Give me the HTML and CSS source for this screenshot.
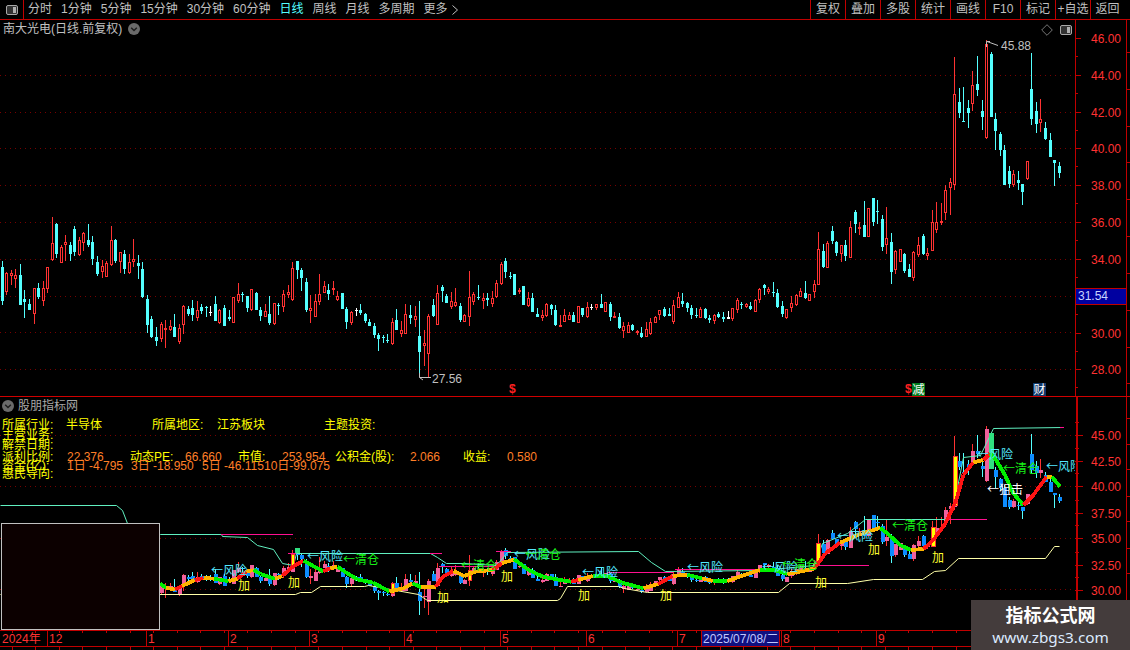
FILE: index.html
```html
<!DOCTYPE html>
<html lang="zh-CN">
<head>
<meta charset="utf-8">
<title>南大光电</title>
<link rel="stylesheet" href="styles.css">
</head>
<body>
<div class="terminal">
  <header class="toolbar">
    <div class="toggle-cell">
      <svg class="toggle-icon" viewBox="0 0 12 10"><rect x="0.5" y="0.5" width="11" height="9" rx="1.5" class="toggle-frame"/><rect x="7" y="2" width="3" height="6" class="toggle-fill"/></svg>
    </div>
    <nav class="periods">
      <span>分时</span><span>1分钟</span><span>5分钟</span><span>15分钟</span><span>30分钟</span><span>60分钟</span><span class="active">日线</span><span>周线</span><span>月线</span><span>多周期</span><span class="more">更多<svg class="more-arrow" viewBox="0 0 6 10"><path d="M.5 .5 5.5 5 .5 9.5"/></svg></span>
    </nav>
    <nav class="tools">
      <span>复权</span><span>叠加</span><span>多股</span><span>统计</span><span>画线</span><span>F10</span><span>标记</span><span>+自选</span><span>返回</span>
    </nav>
  </header>

  <section class="panel panel-price">
    <div class="plot">
      <svg id="price" class="chart" viewBox="0 20 1075 376"></svg>
      <div class="caption caption-price">
        <span>南大光电(日线.前复权)</span>
        <svg class="chevron" viewBox="0 0 12 12"><circle cx="6" cy="6" r="6" class="chevron-disc"/><path d="M3.2 4.8 6 7.6 8.8 4.8" class="chevron-mark"/></svg>
      </div>
      <div class="plot-tools">
        <svg class="diamond" viewBox="0 0 12 12"><path d="M6 .7 11.3 6 6 11.3 .7 6Z"/></svg>
        <svg class="toggle-icon" viewBox="0 0 12 10"><rect x="0.5" y="0.5" width="11" height="9" rx="1.5" class="toggle-frame"/><rect x="7" y="2" width="3" height="6" class="toggle-fill"/></svg>
      </div>
    </div>
    <div class="axis">
      <svg id="priceAxis" class="chart" viewBox="1075 20 55 376"></svg>
      <div class="last-price">31.54</div>
    </div>
  </section>

  <section class="panel panel-indicator">
    <div class="plot">
      <svg id="indicator" class="chart" viewBox="0 397 1075 233"></svg>
      <div class="caption caption-indicator">
        <svg class="chevron" viewBox="0 0 12 12"><circle cx="6" cy="6" r="6" class="chevron-disc"/><path d="M3.2 4.8 6 7.6 8.8 4.8" class="chevron-mark"/></svg>
        <span>股朋指标网</span>
      </div>
      <div class="info">
        <div class="row row-a"><span>所属行业:</span><span>半导体</span><span>所属地区:</span><span>江苏板块</span><span>主题投资:</span></div>
        <div class="row row-plain"><span>主营业务:</span></div>
        <div class="row row-plain"><span>解禁日期:</span></div>
        <div class="row row-d"><span>派利比例:</span><b>22.376</b><span>动态PE:</span><b>66.660</b><span>市值:</span><b>253.954</b><span>公积金(股):</span><b>2.066</b><span>收益:</span><b>0.580</b></div>
        <div class="row row-e"><span>资金(亿):</span><b>1日 -4.795</b><b>3日 -18.950</b><b>5日 -46.115</b><b>10日-99.075</b></div>
        <div class="row row-plain"><span>惠民导向:</span></div>
      </div>
      <div class="inset"></div>
    </div>
    <div class="axis axis-indicator">
      <svg id="indicatorAxis" class="chart" viewBox="1075 397 55 233"></svg>
    </div>
  </section>

  <footer class="timeline">
    <svg id="timeline" class="chart" viewBox="0 630 1130 20"></svg>
  </footer>

  <aside class="watermark">
    <strong>指标公式网</strong>
    <span>www.zbgs3.com</span>
  </aside>
</div>
<script src="chart.js"></script>
</body>
</html>
```

FILE: styles.css
```css
* { box-sizing: border-box; }
html, body { margin: 0; padding: 0; background: #000; }
body { overflow: hidden; }

.terminal {
  position: relative;
  width: 1130px;
  height: 650px;
  overflow: hidden;
  background: #000;
  color: #c0c0c0;
  font: 12px/1 "Liberation Sans", "Noto Sans CJK SC", sans-serif;
}

/* toolbar */
.toolbar {
  display: flex;
  height: 20px;
  border-bottom: 1px solid #c00000;
}
.toggle-cell {
  display: flex;
  align-items: center;
  justify-content: center;
  width: 24px;
  border-right: 1px solid #c00000;
}
.toggle-icon { display: block; width: 12px; height: 10px; }
.toggle-frame { fill: #333; stroke: #a8a8a8; }
.toggle-fill { fill: #b0b0b0; }

.periods {
  display: flex;
  align-items: center;
  gap: 9px;
  padding-left: 4px;
  line-height: 19px;
}
.periods .active { color: #54ffff; }
.more { display: flex; align-items: center; gap: 4px; }
.more-arrow { display: block; width: 6px; height: 10px; }
.more-arrow path { fill: none; stroke: #c0c0c0; }

.tools {
  display: flex;
  margin-left: auto;
  width: 320px;
}
.tools span {
  flex: 0 0 35px;
  border-left: 1px solid #c00000;
  text-align: center;
  line-height: 19px;
}
.tools span:last-child { flex: 1 1 auto; padding-right: 6px; }

/* panels */
.panel { display: flex; }
.panel-price { height: 376px; }
.panel-indicator { height: 234px; border-top: 1px solid #d00000; }
.plot { position: relative; width: 1075px; }
.axis { position: relative; width: 55px; }
.chart { display: block; width: 100%; height: 100%; }
#timeline { height: 20px; }

.caption {
  position: absolute;
  display: flex;
  align-items: center;
}
.caption-price { left: 3px; top: 2px; height: 14px; gap: 6px; }
.caption-indicator { left: 2px; top: 2px; height: 14px; gap: 4px; color: #a8a8a8; }
.chevron { display: block; width: 12px; height: 12px; }
.chevron-disc { fill: #6a6a6a; }
.chevron-mark { fill: none; stroke: #1c1c1c; stroke-width: 1.4; }

.plot-tools {
  position: absolute;
  right: 3px;
  top: 4px;
  display: flex;
  align-items: center;
  gap: 7px;
}
.diamond { display: block; width: 12px; height: 12px; }
.diamond path { fill: none; stroke: #777; }

.last-price {
  position: absolute;
  left: 0;
  top: 268px;
  width: 52px;
  height: 17px;
  padding-left: 2px;
  background: #0000a0;
  border: 1px solid #c00000;
  color: #c8d4ff;
  line-height: 15px;
}

/* info rows */
.info {
  position: absolute;
  left: 2px;
  top: 22px;
  color: #ffff00;
}
.row { display: grid; white-space: nowrap; }
.row b { font-weight: 400; color: #ff7f27; }
.row span, .row b { line-height: 12px; }
.row:nth-child(1) { height: 10px; }
.row:nth-child(2) { height: 10px; }
.row:nth-child(3) { height: 12px; }
.row:nth-child(4) { height: 9px; }
.row:nth-child(5) { height: 8px; }
.row:nth-child(6) { height: 12px; }
.row-a { grid-template-columns: 64px 86px 65px 107px auto; }
.row-d { grid-template-columns: 65px 63px 55px 53px 44px 53px 75px 53px 44px auto; }
.row-e { grid-template-columns: 65px 64px 71px 62px auto; }

.inset {
  position: absolute;
  left: 1px;
  top: 126px;
  width: 159px;
  height: 107px;
  background: #0c0000;
  border: 1px solid #c0c0c0;
}

/* timeline */
.timeline { height: 20px; }

/* chart marks */
.grid { stroke: #780000; stroke-width: 1; stroke-dasharray: 1 4; fill: none; shape-rendering: crispEdges; }
.axis-line { stroke: #c00000; stroke-width: 1; fill: none; shape-rendering: crispEdges; }
.axis-line-bold { stroke: #c00000; stroke-width: 2; fill: none; shape-rendering: crispEdges; }
.axis-text { fill: #ff3232; font: 12px "Liberation Sans", sans-serif; }
.time-text { fill: #ff3232; font: 12px "Liberation Sans", "Noto Sans CJK SC", sans-serif; }
.date-box { fill: #101080; stroke: #c00000; }
.date-text { fill: #c0c8ff; font: 12px "Liberation Sans", "Noto Sans CJK SC", sans-serif; }
.extreme-text { fill: #c0c0c0; font: 12px "Liberation Sans", sans-serif; }
.extreme-mark { stroke: #c0c0c0; fill: none; }
.wick-up { stroke: #ff3232; }
.wick-down { stroke: #54ffff; }
.wick-flat { stroke: #fff; }
.body-up { fill: #000; stroke: #ff3232; }
.body-down { fill: #54ffff; }
.body-flat { fill: #fff; }
.pink { fill: #f0609c; }
.blue { fill: #0c8cff; }
.signal-yellow { fill: #ffff00; stroke: #ff3232; }
.signal-green { fill: #30e080; }
.support { fill: none; stroke: #ffffa8; stroke-width: 1; }
.resist { fill: none; stroke: #60f0c0; stroke-width: 1; }
.pressure { fill: none; stroke: #ff1090; stroke-width: 1; shape-rendering: crispEdges; }
.trend { fill: none; stroke-width: 3.8; shape-rendering: crispEdges; }
.trend-r { stroke: #ff1414; }
.trend-g { stroke: #00f000; }
.trend-o { stroke: #ffb400; }
.tag { font: 12px "Noto Sans CJK SC", sans-serif; }
.tag-risk { fill: #54e8ff; }
.tag-clear { fill: #18f018; }
.tag-add { fill: #ffff30; }
.tag-hit { fill: #fff; }
.mark-s { fill: #ff2020; font: bold 12px "Liberation Sans", sans-serif; }
.badge-green { fill: #007a1e; }
.badge-navy { fill: #10386a; }
.badge-text { fill: #fff; font: 12px "Noto Sans CJK SC", sans-serif; }

/* watermark */
.watermark {
  position: absolute;
  left: 971px;
  top: 600px;
  width: 159px;
  height: 50px;
  padding-top: 4px;
  display: flex;
  flex-direction: column;
  align-items: center;
  gap: 3px;
  background: #443c3c;
}
.watermark strong {
  color: #fff;
  font: 700 18px/21px "Noto Sans CJK SC", sans-serif;
}
.watermark span {
  color: #dcebff;
  font: 15.3px/18px "Noto Sans", sans-serif;
}
```

FILE: chart.js
```js
const NS = 'http://www.w3.org/2000/svg';
function add(svg, tag, cls, attrs, text) {
  const n = document.createElementNS(NS, tag);
  if (cls) n.setAttribute('class', cls);
  for (const k in attrs) n.setAttribute(k, attrs[k]);
  if (text !== undefined) n.textContent = text;
  svg.appendChild(n);
  return n;
}
const price = document.getElementById('price');
const priceAxis = document.getElementById('priceAxis');
const indicator = document.getElementById('indicator');
const indicatorAxis = document.getElementById('indicatorAxis');
const timeline = document.getElementById('timeline');

/* candles: x, high, bodyTop, bodyBottom, low, kind (measured in 3x crops) */
const blocks = [
  [0, 210, [[7,153,171,273,285,'c'],[19,185,190,245,255,'r'],[34,180,190,197,225,'r'],[46,177,195,207,235,'r'],[61,162,195,285,285,'c'],[73,240,267,276,324,'c'],[88,267,282,300,300,'c'],[103,235,235,311,342,'r'],[115,219,235,262,268,'c'],[130,213,235,273,288,'r'],[142,171,172,238,249,'r'],[157,21,100,150,153,'r'],[169,40,42,132,144,'c'],[184,106,112,158,159,'r'],[196,75,96,105,153,'r'],[211,97,105,132,153,'c'],[223,48,57,126,138,'c'],[238,82,91,135,138,'r'],[250,66,70,99,123,'r'],[265,42,91,105,111,'c'],[277,78,96,147,165,'c'],[292,138,156,192,198,'c'],[307,150,168,186,204,'r'],[319,153,159,201,201,'r'],[334,48,91,165,168,'r'],[346,87,90,153,159,'c'],[361,126,126,156,189,'r'],[373,121,132,177,192,'c'],[388,132,156,189,192,'r'],[400,87,148,156,171,'r'],[415,135,159,168,207,'c'],[427,156,177,261,264,'c'],[442,255,267,345,369,'c'],[454,318,327,381,384,'c'],[469,351,381,393,408,'c'],[484,336,342,387,396,'r'],[496,330,354,360,414,'r'],[511,330,348,360,363,'r'],[523,312,351,381,381,'c'],[538,342,354,396,402,'r'],[550,285,288,346,372,'r'],[565,288,297,312,318,'c'],[577,270,294,315,333,'c'],[592,273,300,324,333,'r'],[604,282,291,303,312,'c'],[619,288,291,293,321,'c'],[631,288,306,307,318,'w'],[646,258,282,333,333,'c'],[658,297,300,339,342,'r'],[673,285,294,348,348,'c'],[688,300,321,327,333,'c'],[700,261,261,339,339,'r'],[715,219,252,273,279,'r'],[727,246,252,255,276,'c'],[742,258,258,294,306,'c'],[754,237,238,300,303,'r'],[769,246,249,300,300,'c'],[781,291,300,318,333,'c'],[796,282,303,321,321,'r'],[808,258,312,339,345,'c'],[823,279,279,342,345,'r'],[835,279,284,287,315,'c'],[850,240,252,291,306,'r'],[865,225,246,255,264,'r'],[877,156,174,270,273,'r'],[892,153,153,180,207,'c']]],
  [300, 240, [[4,84,90,114,153,'c'],[19,114,126,210,216,'c'],[31,165,204,213,249,'r'],[46,162,183,231,231,'r'],[58,102,162,186,195,'r'],[73,123,138,159,159,'r'],[85,132,150,162,180,'c'],[100,123,144,150,165,'r'],[112,153,168,180,183,'r'],[127,159,159,207,207,'c'],[139,201,207,246,267,'c'],[154,213,216,249,255,'r'],[169,204,210,212,228,'w'],[181,192,210,219,225,'c'],[196,219,222,243,249,'c'],[208,237,246,258,258,'c'],[223,249,258,285,294,'c'],[235,279,285,297,333,'c'],[250,285,291,294,309,'c'],[262,282,300,303,309,'c'],[277,234,246,312,315,'r'],[289,207,240,270,270,'c'],[304,243,270,282,291,'r'],[316,192,222,282,282,'r'],[331,195,225,234,252,'c'],[346,198,228,240,261,'r'],[358,183,288,336,411,'c'],[373,270,309,318,378,'r'],[385,222,228,342,411,'r'],[400,177,195,228,231,'c'],[412,135,159,255,255,'r'],[427,135,141,153,186,'c'],[439,162,168,189,189,'c'],[454,156,183,201,207,'r'],[466,144,186,198,201,'r'],[481,189,198,240,246,'c'],[493,222,225,246,246,'r'],[508,93,171,231,258,'r'],[520,156,162,186,195,'r'],[535,135,171,174,180,'c'],[550,159,174,183,207,'r'],[562,159,174,180,198,'c'],[577,153,174,192,201,'r'],[589,120,129,171,174,'r'],[604,66,72,132,135,'r'],[616,54,63,96,114,'c'],[631,96,108,111,117,'c'],[643,102,102,165,165,'c'],[658,144,150,156,162,'r'],[670,138,138,195,195,'c'],[685,156,174,198,201,'r'],[697,159,174,216,216,'c'],[712,204,222,231,231,'c'],[727,210,225,234,243,'r'],[739,189,192,228,231,'r'],[754,192,195,207,225,'c'],[766,195,210,255,258,'c'],[781,225,255,261,261,'r'],[793,207,225,246,246,'r'],[808,216,225,240,240,'r'],[820,216,225,246,246,'c'],[835,198,198,249,249,'r'],[847,204,204,225,231,'c'],[862,186,201,231,234,'r'],[873,192,201,204,210,'w'],[889,192,192,204,210,'r']]],
  [600, 190, [[4,312,342,354,354,'c'],[16,336,336,366,366,'r'],[31,336,342,381,393,'c'],[43,366,378,384,384,'r'],[58,369,381,414,417,'c'],[70,396,408,423,444,'r'],[85,396,405,429,429,'r'],[97,402,405,420,423,'c'],[112,420,423,429,435,'r'],[124,411,429,441,444,'c'],[139,396,417,441,441,'r'],[151,384,396,432,435,'r'],[166,378,381,399,399,'r'],[178,360,360,375,390,'r'],[193,351,357,378,381,'c'],[208,354,372,378,378,'c'],[220,330,345,396,402,'r'],[235,306,321,354,354,'r'],[247,309,333,342,351,'c'],[262,336,339,354,366,'c'],[274,345,354,375,387,'c'],[289,354,375,378,384,'c'],[301,351,357,384,384,'r'],[316,354,357,384,387,'c'],[328,375,384,390,399,'c'],[343,372,375,393,402,'r'],[355,366,372,381,384,'c'],[370,366,381,387,396,'c'],[385,363,381,387,387,'w'],[397,354,354,387,393,'r'],[412,324,330,360,369,'r'],[424,336,342,345,357,'c'],[439,339,342,351,354,'r'],[451,336,348,357,360,'c'],[466,327,330,366,366,'r'],[478,294,297,330,339,'r'],[493,282,285,294,315,'c'],[505,291,297,306,312,'r'],[520,276,306,309,321,'c'],[532,297,309,351,354,'c'],[547,333,348,372,381,'c'],[559,357,357,384,387,'r'],[574,318,339,354,366,'r'],[589,312,315,345,348,'r'],[601,294,303,321,321,'r'],[616,273,309,324,327,'c'],[628,312,312,333,333,'r'],[643,270,282,306,324,'r'],[655,126,177,285,285,'r'],[670,162,183,231,234,'c'],[682,153,159,234,234,'r'],[697,108,123,153,162,'c'],[709,153,156,189,198,'c'],[724,165,165,192,216,'r'],[736,150,165,198,213,'c'],[751,93,111,204,204,'r'],[766,60,66,102,129,'c'],[778,96,111,114,135,'r'],[793,33,105,141,141,'c'],[805,54,54,141,141,'r'],[820,24,24,96,108,'c'],[832,30,63,66,102,'c'],[847,75,87,171,183,'c'],[859,51,144,165,192,'r'],[874,129,156,246,282,'c'],[886,180,183,240,252,'r']]],
  [900, 30, [[0,657,657,695,695,'r'],[13,670,672,723,729,'c'],[28,702,717,741,741,'c'],[40,663,666,744,753,'r'],[55,621,645,675,681,'r'],[70,612,618,672,675,'c'],[82,654,669,678,690,'r'],[97,540,576,662,662,'r'],[109,516,576,600,609,'r'],[124,519,573,579,585,'r'],[136,465,480,549,570,'r'],[151,444,456,474,555,'r'],[163,81,192,465,480,'r'],[178,174,216,249,264,'c'],[190,171,273,276,276,'c'],[205,210,234,249,294,'c'],[217,123,165,222,243,'r'],[232,78,162,180,198,'c'],[247,210,243,261,300,'c'],[259,30,42,324,327,'r'],[274,66,72,261,261,'c'],[286,249,267,303,360,'c'],[301,306,312,360,378,'c'],[313,345,360,465,465,'c'],[328,408,423,462,474,'c'],[340,420,432,465,471,'r'],[355,423,450,459,480,'c'],[367,462,462,486,525,'c'],[382,393,393,447,450,'r'],[394,69,177,267,285,'c'],[409,216,243,282,309,'c'],[421,207,267,279,306,'r'],[436,276,294,327,330,'c'],[451,309,330,381,381,'c'],[463,390,390,399,468,'c'],[478,396,408,429,444,'c']]]
];

const toLower = y => 425.19 + (y - 38) * 0.5588;

/* grids */
for (const y of [75, 112, 148.5, 185, 222, 259, 296, 332.5, 369]) {
  const yy = Math.floor(y) + 0.5;
  add(price, 'line', 'grid', { x1: 0, x2: 1075, y1: yy, y2: yy });
}
for (const y of [435.5, 486.5, 538.5, 589.5]) {
  add(indicator, 'line', 'grid', { x1: 0, x2: 1075, y1: y, y2: y });
}

/* candles */
for (const [ox, oy, rows] of blocks) {
  for (const [zx, hi, top, bot, lo, kind] of rows) {
    const x = Math.round(ox + zx / 3);
    const h = Math.round(oy + hi / 3), t = Math.round(oy + top / 3);
    const b = Math.max(Math.round(oy + bot / 3), t + 1), l = Math.max(Math.round(oy + lo / 3), b);
    const wick = { r: 'wick-up', c: 'wick-down', w: 'wick-flat' }[kind];
    add(price, 'line', wick, { x1: x + .5, x2: x + .5, y1: h, y2: l });
    if (kind === 'r') {
      add(price, 'rect', 'body-up', { x: x - .5, y: t + .5, width: 2, height: Math.max(b - t - 1, 1) });
    } else {
      add(price, 'rect', kind === 'c' ? 'body-down' : 'body-flat', { x: x - 1, y: t, width: 3, height: b - t });
    }
    const lh = toLower(h), lt = toLower(t), lb = toLower(b), ll = toLower(l);
    add(indicator, 'line', kind === 'r' ? 'wick-up' : 'wick-down', { x1: x + .5, x2: x + .5, y1: lh, y2: ll });
    add(indicator, 'rect', kind === 'r' ? 'pink' : 'blue', { x: x - 1.5, y: lt, width: 4, height: Math.max(lb - lt, 1) });
  }
}
price.querySelectorAll('line,rect').forEach(n => n.setAttribute('shape-rendering', 'crispEdges'));
indicator.querySelectorAll('line,rect').forEach(n => n.setAttribute('shape-rendering', 'crispEdges'));

/* extremes */
add(price, 'path', 'extreme-mark', { d: 'M986.5 47V41.5H990M987 41.5 998 45.5' });
add(price, 'text', 'extreme-text', { x: 1001, y: 50 }, '45.88');
add(price, 'path', 'extreme-mark', { d: 'M419.5 373V377.5H431M419.5 377.5 423 380' });
add(price, 'text', 'extreme-text', { x: 432, y: 383 }, '27.56');

/* event marks */
add(price, 'text', 'mark-s', { x: 509, y: 393 }, '$');
add(price, 'text', 'mark-s', { x: 905, y: 393 }, '$');
add(price, 'rect', 'badge-green', { x: 912, y: 383, width: 13, height: 13 });
add(price, 'text', 'badge-text', { x: 912.5, y: 394 }, '减');
add(price, 'rect', 'badge-navy', { x: 1033, y: 383, width: 13, height: 13 });
add(price, 'text', 'badge-text', { x: 1033.5, y: 394 }, '财');

/* price axis */
[[46,38],[44,75],[42,112],[40,148.5],[38,185.5],[36,222.5],[34,259],[32,296],[30,333],[28,369]].forEach(([p, y]) => {
  const yy = Math.floor(y) + .5;
  add(priceAxis, 'line', 'axis-line', { x1: 1075, x2: 1081, y1: yy, y2: yy });
  if (p !== 32) add(priceAxis, 'text', 'axis-text', { x: 1091, y: yy + 4 }, p.toFixed(2));
  const m = Math.floor(y + 18.45) + .5;
  if (m < 395) add(priceAxis, 'line', 'axis-line', { x1: 1075, x2: 1078, y1: m, y2: m });
  add(priceAxis, 'line', 'axis-line', { x1: 1127, x2: 1130, y1: m - 4, y2: m - 4 });
});
add(priceAxis, 'line', 'axis-line', { x1: 1075.5, x2: 1075.5, y1: 20, y2: 396 });
add(priceAxis, 'line', 'axis-line', { x1: 1126.5, x2: 1126.5, y1: 20, y2: 396 });

/* indicator axis */
[[45,435.5],[42.5,461.5],[40,486.5],[37.5,513],[35,538.5],[32.5,565],[30,590]].forEach(([p, y]) => {
  const yy = Math.floor(y) + .5;
  add(indicatorAxis, 'line', 'axis-line', { x1: 1075, x2: 1083, y1: yy, y2: yy });
  add(indicatorAxis, 'text', 'axis-text', { x: 1091, y: yy + 4 }, p.toFixed(2));
  add(indicatorAxis, 'line', 'axis-line', { x1: 1075, x2: 1079, y1: yy - 13, y2: yy - 13 });
  add(indicatorAxis, 'line', 'axis-line', { x1: 1127, x2: 1130, y1: yy - 17, y2: yy - 17 });
});
add(indicatorAxis, 'line', 'axis-line-bold', { x1: 1077, x2: 1077, y1: 397, y2: 630 });
add(indicatorAxis, 'line', 'axis-line', { x1: 1126.5, x2: 1126.5, y1: 397, y2: 630 });

/* indicator lines */
const poly = (cls, pts) => add(indicator, 'polyline', cls, { points: pts.map(p => (p[0] + .5) + ',' + (p[1] + .5)).join(' ') });
poly('resist', [[0,505],[116,505],[122,510],[127,523],[160,534],[221,534],[222,536],[247,537],[257,545],[273,549],[282,563],[293,565],[296,553],[430,553],[437,557],[446,563],[464,563],[496,565],[507,552],[638,551],[651,562],[665,571],[760,570],[814,565],[822,543],[847,533],[865,519],[945,519],[953,507],[963,457],[980,455],[993,428],[1063,427]]);
poly('support', [[0,594],[295,594],[300,592],[311,592],[320,586],[364,586],[368,585],[418,594],[427,600],[557,600],[560,598],[567,586],[618,586],[624,588],[647,592],[778,592],[789,583],[847,583],[873,579],[922,579],[934,571],[945,570],[958,558],[1045,558],[1054,546],[1059,546]]);
[[221,293,534],[288,296,553],[430,442,553],[439,496,566],[496,511,551],[607,673,572],[675,760,569],[814,869,565],[945,987,519],[1060,1064,427]].forEach(([a, b, y]) => {
  add(indicator, 'line', 'pressure', { x1: a, x2: b, y1: y + .5, y2: y + .5 });
});

/* signal bars */
[[291,554,3,11],[391,583,3,10],[468,570,3,10],[816,543,4,19],[931,527,4,19],[953,456,4,49]].forEach(([x, y, w, h]) => {
  add(indicator, 'rect', 'signal-yellow', { x: x + .5, y: y + .5, width: w, height: h });
});
add(indicator, 'rect', 'signal-green', { x: 295, y: 548, width: 5, height: 5 });
add(indicator, 'rect', 'signal-green', { x: 989, y: 433, width: 5, height: 36 });

/* trend line: crop coordinates plus the colour of the segment ending at each point */
const Z4 = (x, y) => [x / 2.8, 500 + y / 3];
const Z5 = (x, y) => [560 + x / 2.75, 500 + y / 3];
const Z6 = (x, y) => [880 + x / 3, 370 + y / 3];
const route = [
  [Z4, [[448,250,'g'],[465,264,'g'],[490,268,'o'],[510,258,'r'],[545,240,'o'],[570,234,'r'],[600,236,'o'],[640,244,'g'],[665,236,'o'],[690,215,'r'],[710,210,'o'],[730,222,'g'],[770,236,'g'],[790,228,'o'],[820,200,'r'],[850,182,'r'],[880,200,'g'],[905,214,'g'],[925,205,'r'],[945,200,'o'],[965,215,'g'],[1000,238,'g'],[1045,248,'g'],[1090,274,'g'],[1130,265,'o'],[1155,250,'o'],[1180,262,'g'],[1220,260,'o'],[1240,230,'r'],[1270,213,'r'],[1300,228,'o'],[1330,215,'o'],[1380,210,'o'],[1405,190,'r'],[1440,178,'o'],[1480,210,'g'],[1520,230,'g'],[1568,240,'g']]],
  [Z5, [[0,240,'o'],[30,245,'g'],[50,240,'r'],[90,228,'o'],[130,228,'g'],[170,248,'g'],[230,265,'g'],[270,252,'o'],[310,228,'r'],[350,224,'o'],[390,235,'g'],[420,243,'o'],[460,243,'g'],[500,228,'o'],[550,210,'o'],[590,210,'g'],[625,222,'g'],[660,215,'o'],[700,205,'o'],[730,160,'r'],[770,128,'r'],[830,100,'o'],[880,84,'o'],[900,100,'g'],[935,135,'g'],[965,150,'g'],[1000,147,'o'],[1030,115,'r'],[1060,70,'r'],[1090,0,'r']]],
  [Z6, [[250,315,'r'],[280,277,'r'],[310,270,'o'],[330,250,'r'],[345,265,'g'],[375,315,'g'],[400,370,'g'],[430,405,'g'],[460,375,'r'],[500,320,'r'],[515,320,'o'],[540,350,'g']]]
];
let last = null;
for (const [fn, pts] of route) {
  for (const [x, y, c] of pts) {
    const p = fn(x, y);
    if (last) add(indicator, 'line', 'trend trend-' + c, { x1: last[0], y1: last[1], x2: p[0], y2: p[1] });
    last = p;
  }
}

/* tags */
const tag = (x, y, cls, text) => add(indicator, 'text', 'tag ' + cls, { x, y: y + 4 }, text);
[[211,571],[307,557],[514,555],[582,573],[687,568],[762,568],[837,537],[977,455],[1046,467]].forEach(([x, y]) => tag(x, y, 'tag-risk', '←风险'));
[[343,560],[461,566],[525,555],[782,565],[892,526],[1003,469]].forEach(([x, y]) => tag(x, y, 'tag-clear', '←清仓'));
[[238,586],[288,583],[437,598],[501,577],[578,596],[660,596],[815,583],[868,550],[932,558]].forEach(([x, y]) => tag(x, y, 'tag-add', '加'));
tag(987, 490, 'tag-hit', '←狙击');

/* timeline */
const hline = (y, a, b) => add(timeline, 'line', 'axis-line', { x1: a, x2: b, y1: y, y2: y });
hline(630.5, 0, 1130);
hline(646.5, 0, 1130);
for (let x = 12; x < 971; x += 23.6) {
  const xx = Math.floor(x) + .5;
  add(timeline, 'line', 'axis-line', { x1: xx, x2: xx, y1: 631, y2: 633 });
  add(timeline, 'line', 'axis-line', { x1: xx, x2: xx, y1: 647, y2: 650 });
}
[47,146,228,309,404,500,586,677,781,876].forEach(x => {
  add(timeline, 'line', 'axis-line', { x1: x + .5, x2: x + .5, y1: 631, y2: 646 });
});
[['2024年',2],['12',49],['1',148],['2',230],['3',311],['4',406],['5',502],['6',588],['7',679],['8',783],['9',878]].forEach(([t, x]) => {
  add(timeline, 'text', 'time-text', { x, y: 643 }, t);
});
add(timeline, 'rect', 'date-box', { x: 701.5, y: 630.5, width: 78, height: 16 });
add(timeline, 'text', 'date-text', { x: 703, y: 643 }, '2025/07/08/二');
```
